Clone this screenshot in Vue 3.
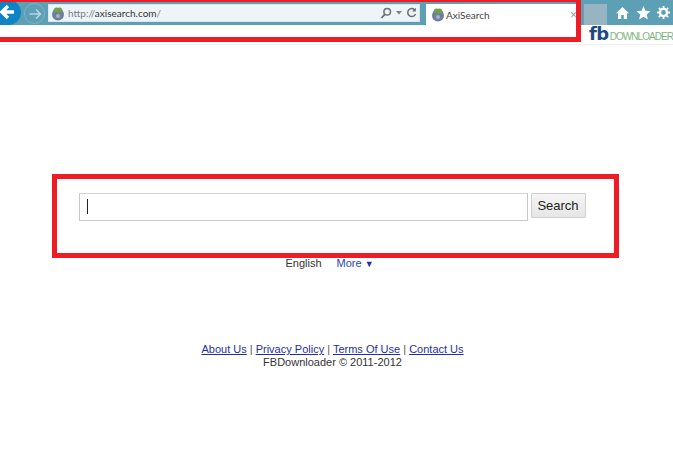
<script setup>
const links = ['About Us', 'Privacy Policy', 'Terms Of Use', 'Contact Us']
</script>

<template>
  <div class="page">
    <header class="chrome">
      <div class="nav">
        <div class="back">
          <svg width="20" height="16" viewBox="0 0 20 16"><path d="M8 2 2 8l6 6M2 8h12" fill="none" stroke="#fff" stroke-width="3.4" /></svg>
        </div>
        <div class="forward">
          <svg width="14" height="12" viewBox="0 0 14 12"><path d="M8 1.500 12.500 6 8 10.500M12 6H1.500" fill="none" stroke="#b9d6df" stroke-width="1.600" /></svg>
        </div>
      </div>
      <div class="address">
        <svg class="globe" width="14" height="15" viewBox="0 0 14 15">
          <circle cx="7" cy="8.500" r="6" fill="#6d7f9c" />
          <path d="M2.500 5C3 1.500 5 1 7 2c2-1 4-.5 4.500 3-1.500 2-7.500 2-9 0Z" fill="#6fa052" />
          <circle cx="7" cy="10" r="2" fill="#a9b2c6" />
        </svg>
        <span class="url"><span class="dim">http://</span><span class="host">axisearch.com</span><span class="dim">/</span></span>
        <span class="addr-tools">
          <svg width="12" height="13" viewBox="0 0 12 13"><circle cx="7.200" cy="4.800" r="3.300" fill="none" stroke="#6b6f72" stroke-width="1.500" /><path d="M4.800 7.300 1.500 11" stroke="#6b6f72" stroke-width="1.800" /></svg>
          <svg width="6" height="4" viewBox="0 0 6 4"><path d="M0 0h6L3 3.500Z" fill="#7d8184" /></svg>
          <svg width="11" height="12" viewBox="0 0 11 12"><path d="M9 3.200A4 4 0 1 0 9.500 7" fill="none" stroke="#6b6f72" stroke-width="1.500" /><path d="M9.800 .8v3.700H6.100Z" fill="#6b6f72" /></svg>
        </span>
      </div>
      <div class="tab">
        <svg width="14" height="15" viewBox="0 0 14 15">
          <circle cx="7" cy="8.500" r="6" fill="#6d7f9c" />
          <path d="M2.500 5C3 1.500 5 1 7 2c2-1 4-.5 4.500 3-1.500 2-7.500 2-9 0Z" fill="#6fa052" />
          <circle cx="7" cy="10" r="2" fill="#a9b2c6" />
        </svg>
        <span class="tab-title">AxiSearch</span>
        <span class="tab-close">×</span>
      </div>
      <div class="new-tab"></div>
      <div class="tools">
        <svg width="15" height="14" viewBox="0 0 15 14"><path d="M7.500 1 1 7.200h2V13h3.200V9h2.600v4H12V7.200h2Z" fill="#fff" /></svg>
        <svg width="15" height="14" viewBox="0 0 15 14"><path d="m7.500 0 2 4.800 5 .4-3.800 3.300 1.200 5-4.400-2.700L3.100 13.500l1.200-5L.5 5.200l5-.4Z" fill="#fff" /></svg>
        <svg width="13" height="13" viewBox="0 0 14 14"><circle cx="7" cy="7" r="3.800" fill="none" stroke="#fff" stroke-width="2.400" /><path d="M7 0v3M7 11v3M0 7h3M11 7h3M2 2l2.100 2.100M9.900 9.900 12 12M12 2 9.900 4.100M4.100 9.900 2 12" stroke="#fff" stroke-width="2" /></svg>
      </div>
    </header>

    <div class="brand-row">
      <div class="brand"><span class="fb">fb</span><span class="dl">DOWNLOADER</span></div>
    </div>

    <main class="main">
      <form class="search" @submit.prevent>
        <div class="input"><i class="caret"></i></div>
        <button class="btn" type="button">Search</button>
      </form>
      <div class="lang">
        <span class="eng">English</span>
        <a class="more">More <span class="arrow">▼</span></a>
      </div>
      <nav class="links">
        <template v-for="(l, i) in links" :key="l">
          <span v-if="i"> | </span><a>{{ l }}</a>
        </template>
      </nav>
      <div class="copy">FBDownloader © 2011-2012</div>
    </main>

    <div class="mark mark-top"></div>
    <div class="mark mark-search"></div>
  </div>
</template>

<style>
html, body { margin: 0; background: #fff; }
</style>

<style scoped>
.page {
  position: relative;
  width: 673px;
  height: 471px;
  overflow: hidden;
  background: #fff;
  font-family: "Liberation Sans", Arial, sans-serif;
  font-size: 12px;
  color: #222;
}
.chrome {
  height: 25px;
  display: flex;
  align-items: flex-start;
  background: #5d9fb5;
  box-sizing: border-box;
  padding-top: 4px;
}
.nav { display: flex; align-items: center; width: 48px; height: 19px; flex: none; }
.back {
  width: 21px;
  height: 25px;
  margin-top: -3px;
  border-radius: 0 13px 13px 0;
  background: #0f83c4;
  display: flex;
  align-items: center;
  justify-content: flex-start;
  flex: none;
}
.forward {
  width: 21px;
  height: 21px;
  margin-left: 3px;
  border: 1px solid #7fb4c6;
  border-radius: 50%;
  background: #5d9fb5;
  display: flex;
  align-items: center;
  justify-content: center;
  flex: none;
  box-sizing: border-box;
}
.address {
  width: 372px;
  height: 18px;
  flex: none;
  display: flex;
  align-items: center;
  background: #eef5f8;
  border: 1px solid #d9e7ec;
  box-sizing: border-box;
  padding-left: 2px;
}
.url { margin-left: 3px; font-family: Lato, "Liberation Sans", sans-serif; font-size: 10px; }
.dim { color: #7b8084; }
.host { color: #333; }
.addr-tools { margin-left: auto; display: flex; align-items: center; gap: 4px; padding-right: 2px; }
.tab {
  width: 152px;
  height: 21px;
  margin-left: 6px;
  flex: none;
  display: flex;
  align-items: center;
  background: #fff;
  box-sizing: border-box;
  padding: 0 1px 0 5px;
}
.tab-title { margin-left: 1px; font-family: Lato, "Liberation Sans", sans-serif; font-size: 10px; color: #444; }
.tab-close { margin-left: auto; color: #999; font-size: 12px; }
.new-tab { width: 23px; height: 21px; margin-left: 6px; flex: none; background: #96b4c1; }
.tools { display: flex; align-items: center; gap: 6px; margin-left: 8px; height: 17px; }
.brand-row {
  height: 19px;
  display: flex;
  justify-content: flex-end;
  border-bottom: 1px solid #f1f1f1;
}
.brand { display: flex; align-items: baseline; height: 17px; white-space: nowrap; }
.fb { font-family: "DejaVu Sans", sans-serif; font-weight: 700; font-size: 18px; line-height: 17px; color: #1e4a80; letter-spacing: -.5px; }
.dl { margin-left: 1px; font-size: 10px; letter-spacing: -.95px; color: #7fb583; }
.main {
  display: flex;
  flex-direction: column;
  align-items: center;
}
.search { display: flex; align-items: flex-start; gap: 3px; margin-top: 148px; margin-right: 9px; }
.input {
  width: 449px;
  height: 28px;
  box-sizing: border-box;
  border: 1px solid #c8c8c8;
  border-top-color: #d4d4d4;
  background: #fff;
  position: relative;
}
.caret { position: absolute; left: 7px; top: 5px; width: 1px; height: 15px; background: #222; }
.btn {
  width: 55px;
  height: 25px;
  padding: 0;
  border: 1px solid #cfcfcf;
  border-radius: 1px;
  background: linear-gradient(#f5f5f5, #e6e6e6);
  font: 13px "Liberation Sans", Arial, sans-serif;
  color: #222;
}
.lang { display: flex; gap: 15px; margin-top: 35px; margin-right: 14px; font-size: 11px; line-height: 14px; }
.eng { color: #333; }
.more { color: #2a3fb5; }
.arrow { font-size: 9px; color: #1f2f9e; }
.links { margin-top: 71px; margin-right: 8px; font-size: 11px; line-height: 14px; color: #555; white-space: pre; }
.links a { color: #1f2f9e; text-decoration: underline; }
.copy { margin-right: 8px; font-size: 11px; line-height: 13px; color: #333; }
.mark { position: absolute; box-sizing: border-box; border: 5px solid #ee1c25; pointer-events: none; }
.mark-top { left: -10px; top: 0; width: 591px; height: 42px; border-top-width: 2px; }
.mark-search { left: 52px; top: 174px; width: 567px; height: 84px; }
</style>
